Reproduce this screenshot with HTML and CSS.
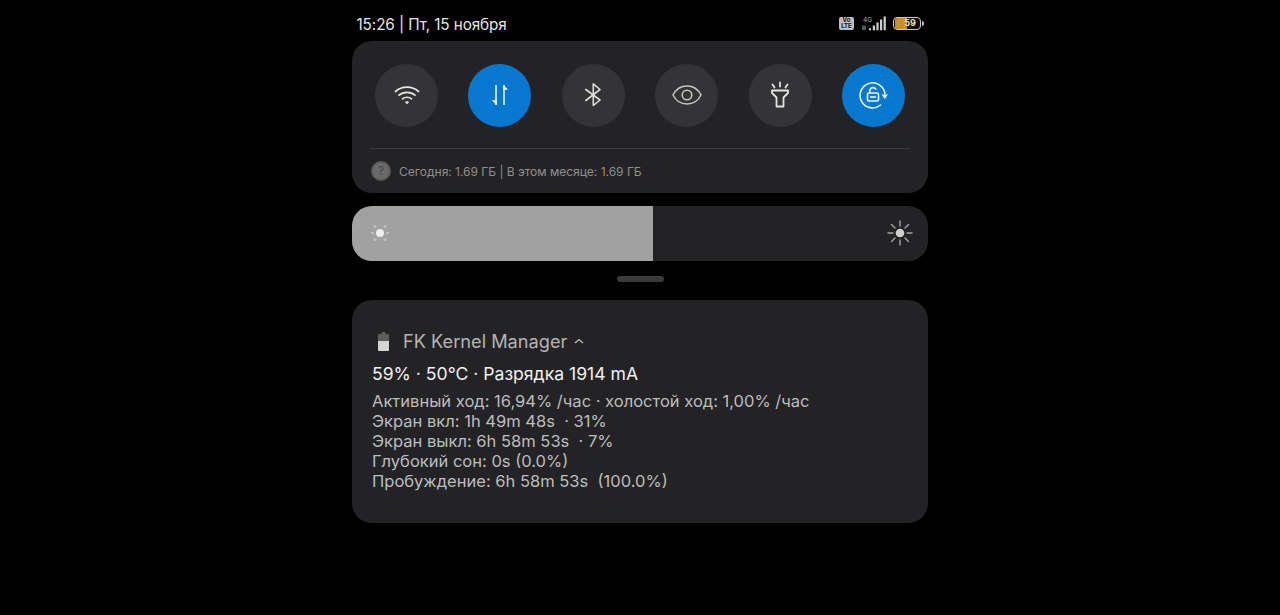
FILE: index.html
```html
<!DOCTYPE html>
<html lang="ru">
<head>
<meta charset="utf-8">
<title>Шторка уведомлений</title>
<link rel="stylesheet" href="styles.css">
</head>
<body>
<main class="shade">
  <header class="status">
    <span class="clock">15:26 | Пт, 15 ноября</span>
    <div class="indicators">
      <span class="volte"><span>Vo</span><span>LTE</span></span>
      <svg class="signal" width="27" height="15" viewBox="0 0 27 15">
        <text x="3" y="5.500" class="net">4G</text>
        <path d="M3 9.500v4.500M5 9.500v4.500" stroke="#aaa" stroke-width="1" fill="none"/>
        <path d="M9 12.200h2v2h-2zM12.800 9.500h2.200v4.700h-2.200zM16.400 6.500h2.200v7.700h-2.200zM20 3.500h2.200v10.700h-2.200zM23.600.500h2.200v13.700h-2.200z" fill="#cfcfcf"/>
      </svg>
      <span class="battery"><span class="battery-fill"></span><span class="battery-num">59</span></span>
      <span class="battery-cap"></span>
    </div>
  </header>

  <section class="card toggles">
    <div class="toggle-row">
      <button class="toggle">
        <svg width="26" height="22" viewBox="0 0 26 22" fill="none" stroke="#e6e6e6" stroke-width="1.700" stroke-linecap="round">
          <path d="M1.500 7.500C7.800 1.700 18.200 1.700 24.500 7.500"/>
          <path d="M5 11.200C9.400 7.300 16.600 7.300 21 11.200"/>
          <path d="M8.500 14.800C11 12.700 15 12.700 17.500 14.800"/>
          <path d="M10.800 18 13 20.300 15.200 18C13.900 16.900 12.100 16.900 10.800 18Z" fill="#e6e6e6" stroke="none"/>
        </svg>
      </button>
      <button class="toggle on">
        <svg width="20" height="26" viewBox="0 0 20 26" fill="#eaf4fc" stroke="#eaf4fc" stroke-width="1.600">
          <path d="M6 3v20" fill="none"/>
          <path d="M6.800 23.200 1.800 18.200h5z" stroke="none"/>
          <path d="M14 23V3" fill="none"/>
          <path d="M13.200 2.800l5 5h-5z" stroke="none"/>
        </svg>
      </button>
      <button class="toggle">
        <svg width="18" height="26" viewBox="0 0 18 26" fill="none" stroke="#dcdcdc" stroke-width="1.600" stroke-linejoin="round" stroke-linecap="round">
          <path d="M1.800 7.500 16 18 9.300 23.500V1.800L16 7.500 1.800 18.500"/>
        </svg>
      </button>
      <button class="toggle">
        <svg width="30" height="22" viewBox="0 0 30 22" fill="none" stroke="#c6c6c6" stroke-width="1.500">
          <path d="M1 11C7-1 23-1 29 11 23 23 7 23 1 11Z"/>
          <circle cx="15" cy="11" r="4.800"/>
        </svg>
      </button>
      <button class="toggle">
        <svg width="24" height="28" viewBox="0 0 24 28" fill="none" stroke="#e2e2e2" stroke-width="1.800" stroke-linejoin="round">
          <path d="M4 9.500h16v2.500l-4.500 4.500v9h-7v-9L4 12Z"/>
          <path d="M12 1.500v4M4.500 3.500l2 3M19.500 3.500l-2 3" stroke-linecap="round"/>
        </svg>
      </button>
      <button class="toggle on">
        <svg width="32" height="30" viewBox="0 0 32 30" fill="none" stroke="#eaf4fc" stroke-width="1.600">
          <path d="M28 14A12.500 12.500 0 1 0 23.500 25" stroke-linecap="round"/>
          <path d="M24.500 14.500h6.500l-3.200 4.500Z" fill="#eaf4fc" stroke="none"/>
          <rect x="10.500" y="13" width="11" height="8" rx="1.500"/>
          <path d="M12.800 13v-2.200a3.300 3.300 0 0 1 6.400-1"/>
          <path d="M13 17h6"/>
        </svg>
      </button>
    </div>
    <hr class="rule">
    <div class="usage">
      <span class="help">?</span>
      <span>Сегодня: 1.69 ГБ | В этом месяце: 1.69 ГБ</span>
    </div>
  </section>

  <section class="slider">
    <div class="slider-fill">
      <svg class="sun-dim" width="20" height="20" viewBox="0 0 20 20" fill="#eeeeee">
        <circle cx="10" cy="10" r="4"/>
        <g opacity=".4">
          <circle cx="2.500" cy="10" r="1.500"/><circle cx="17.500" cy="10" r="1.500"/>
          <circle cx="5" cy="3.500" r="1.500"/><circle cx="15" cy="3.500" r="1.500"/>
          <circle cx="5" cy="16.500" r="1.500"/><circle cx="15" cy="16.500" r="1.500"/>
        </g>
      </svg>
    </div>
    <svg class="sun-bright" width="26" height="26" viewBox="0 0 26 26" fill="none" stroke="#a4a4a4" stroke-width="1.400" stroke-linecap="round">
      <circle cx="13" cy="13" r="4.300" fill="#cfcfcf" stroke="none"/>
      <path d="M13 1v5M13 20v5M1 13h5M20 13h5M4.500 4.500l3.500 3.500M18 18l3.500 3.500M21.500 4.500 18 8M8 18l-3.500 3.500"/>
    </svg>
  </section>

  <div class="handle"></div>

  <section class="card notice">
    <div class="app">
      <svg class="app-icon" width="11" height="19" viewBox="0 0 11 19">
        <path d="M3.500 0h4v2h2.500a1 1 0 0 1 1 1v6H0V3a1 1 0 0 1 1-1h2.500Z" fill="#5c5c5c"/>
        <path d="M0 9h11v9a1 1 0 0 1-1 1H1a1 1 0 0 1-1-1Z" fill="#d4d4d4"/>
      </svg>
      <span class="app-name">FK Kernel Manager</span>
      <svg class="caret" width="10" height="6" viewBox="0 0 10 6" fill="none" stroke="#bdbdbd" stroke-width="1.300"><path d="M1 5 5 1.500 9 5"/></svg>
    </div>
    <h2 class="title">59% · 50°C · Разрядка 1914 mA</h2>
    <p class="details">Активный ход: 16,94% /час · холостой ход: 1,00% /час<br>Экран вкл: 1h 49m 48s &nbsp;· 31%<br>Экран выкл: 6h 58m 53s &nbsp;· 7%<br>Глубокий сон: 0s (0.0%)<br>Пробуждение: 6h 58m 53s &nbsp;(100.0%)</p>
  </section>
</main>
</body>
</html>
```
FILE: styles.css
```css
* { box-sizing: border-box; }
html, body { margin: 0; height: 100%; }
body {
  background: #000;
  color: #fff;
  font-family: Inter, "Noto Sans", sans-serif;
  overflow: hidden;
}
.shade {
  width: 576px;
  margin: 0 auto;
  padding-top: 13px;
  display: flex;
  flex-direction: column;
}
.status {
  height: 28px;
  padding: 0 4px 6px 4.500px;
  display: flex;
  align-items: center;
  justify-content: space-between;
}
.clock { font-size: 15.300px; color: #e4e4e4; letter-spacing: -.1px; }
.indicators { display: flex; align-items: center; margin-top: -2px; }
.volte {
  width: 15px; height: 13px; margin-right: 6px;
  background: #bdbdbd; color: #111; border-radius: 2px;
  display: flex; flex-direction: column; align-items: center; justify-content: center;
  font-size: 6px; font-weight: 700; line-height: 6px;
}
.signal { margin-right: 6px; }
.net { font-size: 6.500px; fill: #aaa; font-family: Inter, sans-serif; }
.battery {
  position: relative; width: 28px; height: 13px;
  border: 1.500px solid #c8c8c8; border-radius: 4px; overflow: hidden;
  display: block; background: #0c0c0c;
}
.battery-fill { display: block; width: 12px; height: 100%; background: #c98f28; margin-left: 1px; }
.battery-num {
  position: absolute; left: 9px; top: 0; width: 14px; text-align: center;
  font-size: 9px; line-height: 10px; font-weight: 700; color: #f0e2b0;
}
.battery-cap { width: 2px; height: 5px; margin-left: 1px; background: #bbb; border-radius: 0 2px 2px 0; }
.card { background: #232325; border-radius: 20px; }
.toggles { height: 152px; padding: 23px 18px 0; }
.toggle-row { display: flex; justify-content: space-between; padding: 0 5px; }
.toggle {
  width: 63px; height: 62.500px; padding: 0; border: 0; border-radius: 50%;
  background: #343436;
  display: flex; align-items: center; justify-content: center;
}
.toggle.on { background: #0778d0; }
.rule { margin: 21.500px 0 0; border: 0; border-top: 1px solid #3d3d3f; }
.usage {
  display: flex; align-items: center; gap: 8px;
  margin-top: 12px; padding-left: 1px;
  font-size: 12.100px; color: #8f8f8f; letter-spacing: -.05px;
}
.help {
  width: 20px; height: 20px; border-radius: 50%; background: #6a6a6a;
  border: 2px solid #5a5a5a;
  color: #444; font-size: 12px; text-align: center; line-height: 16px;
}
.slider {
  height: 55px; margin-top: 13px; background: #232325; border-radius: 20px;
  overflow: hidden; display: flex; align-items: center; justify-content: space-between;
  padding-right: 15px;
}
.slider-fill {
  width: 301px; height: 100%; background: #a1a1a1;
  display: flex; align-items: center; padding: 0 0 1px 18px;
}
.sun-bright { margin-top: -1px; }
.handle { width: 47px; height: 6px; margin: 15px auto 18px; background: #3a3a3c; border-radius: 3px; }
.notice { height: 223px; padding: 31px 20px 0; }
.app { display: flex; align-items: center; height: 20px; }
.app-icon { margin-left: 6px; }
.app-name { margin-left: 14px; font-size: 18.200px; color: #b4b4b4; }
.caret { margin-left: 7px; }
.title { margin: 12px 0 0; font-size: 17.600px; line-height: 22px; font-weight: 400; color: #f0f0f0; }
.details { margin: 6px 0 0; font-size: 16.520px; line-height: 20px; color: #bdbdbd; }
```
